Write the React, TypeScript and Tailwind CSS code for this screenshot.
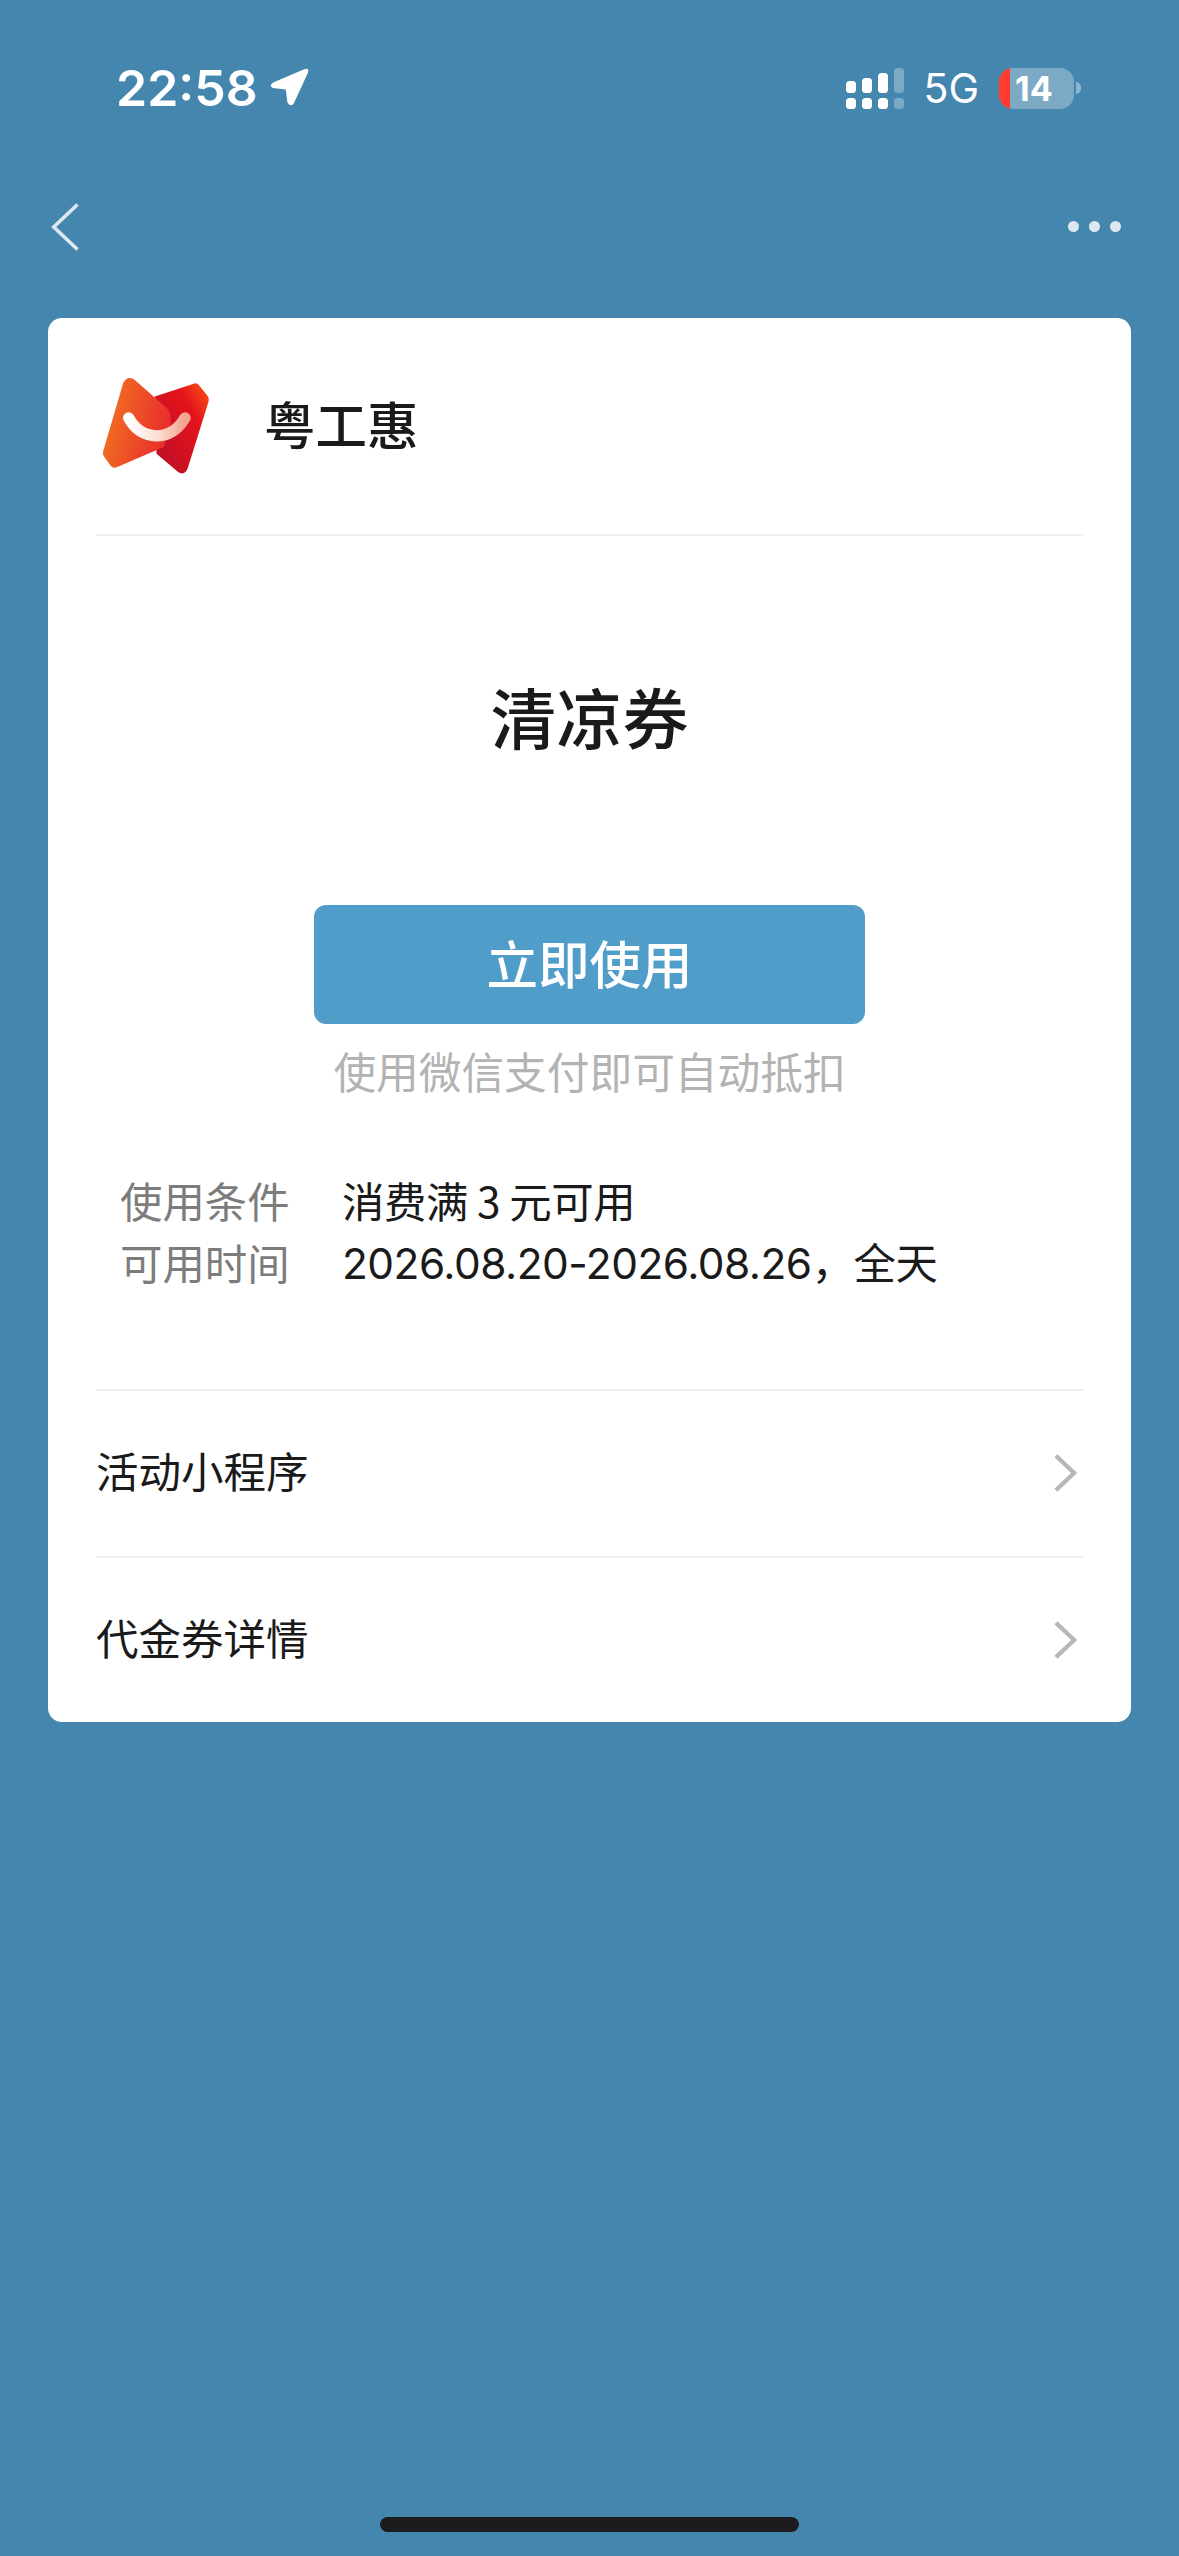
const cjk = "font-['Noto_Sans_CJK_SC','Noto_Sans',sans-serif]";

function Logo() {
  return (
    <svg width="113" height="103" viewBox="180 190 340 310">
      <defs>
        <linearGradient id="back" x1="0" y1="1" x2="1" y2="0">
          <stop offset="0" stopColor="#b80d28" />
          <stop offset="0.7" stopColor="#e5141c" />
          <stop offset="1" stopColor="#fb5a14" />
        </linearGradient>
        <linearGradient id="front" x1="0" y1="0" x2="1" y2="0.3">
          <stop offset="0" stopColor="#f47a20" />
          <stop offset="1" stopColor="#e8302c" />
        </linearGradient>
        <linearGradient id="smile" x1="0" y1="0" x2="1" y2="0">
          <stop offset="0" stopColor="#ffffff" />
          <stop offset="0.55" stopColor="#fbdcd0" />
          <stop offset="1" stopColor="#f2a38e" />
        </linearGradient>
      </defs>
      <path d="M345 258 L462 219 Q472 216 478 224 L504 256 Q510 263 507 272 L444 474 Q436 496 416 486 L350 430 Z" fill="url(#back)" />
      <path d="M250 216 Q262 194 282 206 L378 290 Q398 308 392 340 L372 410 L232 470 Q220 476 212 466 L192 438 Q186 430 190 420 Z" fill="url(#front)" />
      <path d="M266 322 Q296 376 350 376 Q404 376 436 322" fill="none" stroke="url(#smile)" strokeWidth="34" strokeLinecap="round" />
    </svg>
  );
}

function SignalIcon() {
  const bars = [
    { x: 0, top: 13, h: 12, o: 1 },
    { x: 16, top: 10, h: 15, o: 1 },
    { x: 32, top: 5, h: 20, o: 1 },
    { x: 48, top: 0, h: 25, o: 0.3 },
  ];
  return (
    <svg width="58" height="41" viewBox="0 0 58 41" fill="#fff">
      {bars.map((b) => (
        <g key={b.x} opacity={b.o}>
          <rect x={b.x} y={b.top} width="10" height={b.h} rx="3.5" />
          <rect x={b.x} y="30" width="10" height="11" rx="3.5" />
        </g>
      ))}
    </svg>
  );
}

function Chevron({ dir, className, width }: { dir: 'left' | 'right'; className: string; width: string }) {
  return (
    <svg className={className} viewBox="0 0 24 40" fill="none" stroke="currentColor" strokeWidth={width}>
      <path d={dir === 'left' ? 'M22 2 L3 20 L22 38' : 'M2 2 L21 20 L2 38'} />
    </svg>
  );
}

function LinkRow({ label }: { label: string }) {
  return (
    <div className="h-[166.5px] flex items-center justify-between border-t-2 border-[#efefef] pr-[6px]">
      <span className="text-[42.5px] text-[#1a1a1a] pb-[6px]">{label}</span>
      <Chevron dir="right" width="4.6" className="w-[23px] h-[40px] text-[#b7b7b7]" />
    </div>
  );
}

export default function App() {
  return (
    <div className={`relative h-[2556px] bg-[#4486ad] flex flex-col ${cjk}`}>
      {/* status bar */}
      <div className="h-[175px] pt-[60px] pl-[116px] pr-[98px] flex justify-between items-start text-white">
        <div className="flex items-center gap-[10px] h-[56px]">
          <span className="font-['Inter',sans-serif] text-[50px] font-semibold leading-none">22:58</span>
          <svg width="42" height="42" viewBox="800 110 130 130" fill="#fff" className="-mt-[2px]">
            <path d="M912 120 L818 160 Q800 170 815 178 L855 183 L860 222 Q870 240 880 225 L924 130 Q928 114 912 120Z" />
          </svg>
        </div>
        <div className="flex items-center h-[56px]">
          <SignalIcon />
          <span className="font-['Inter',sans-serif] text-[41px] ml-[19px] mr-[20px] leading-none">5G</span>
          <div className="w-[75px] h-[41px] rounded-[14px] bg-white/30 overflow-hidden flex">
            <div className="w-[11px] bg-[#ff3b30]" />
            <span className="font-['Inter',sans-serif] text-[34px] font-bold leading-[41px] pl-[5px]">14</span>
          </div>
          <div className="w-[5px] h-[12px] ml-[2px] rounded-r-full bg-white/40" />
        </div>
      </div>

      {/* nav */}
      <div className="h-[143px] pl-[50px] pr-[58px] flex justify-between items-start pt-[25px]">
        <Chevron dir="left" width="2.9" className="w-[30px] h-[54px] text-[#dbe8f0]" />
        <div className="flex gap-[10px] mt-[21px]">
          <div className="w-[11px] h-[11px] rounded-full bg-[#dbe8f0]" />
          <div className="w-[11px] h-[11px] rounded-full bg-[#dbe8f0]" />
          <div className="w-[11px] h-[11px] rounded-full bg-[#dbe8f0]" />
        </div>
      </div>

      {/* card */}
      <div className="mx-[48px] bg-white rounded-[14px] px-[48px]">
        <div className="h-[216px] flex items-center">
          <div className="ml-[4px] -mt-[2px]">
            <Logo />
          </div>
          <span className="ml-[51px] text-[51.5px] font-medium text-[#1a1a1a] pb-[6px]">粤工惠</span>
        </div>

        <div className="h-[371px] flex items-center justify-center border-t-2 border-[#efefef]">
          <h1 className="text-[66px] font-medium text-[#1a1a1a] pb-[10px]">清凉券</h1>
        </div>

        <div className="w-[551px] h-[119px] mx-auto rounded-[12px] bg-[#4f9dc8] flex items-center justify-center text-[51.5px] font-medium text-white pb-[6px]">
          立即使用
        </div>
        <p className="text-center text-[42.7px] leading-[92px] pb-[4px] text-[#b3b3b3]">使用微信支付即可自动抵扣</p>

        <div className="mt-[49px] pl-[24px] grid grid-cols-[222px_1fr] text-[42.4px] leading-[62px]">
          <span className="text-[#7c7c7c]">使用条件</span>
          <span className="text-[#1a1a1a] tracking-[-0.4px]">消费满 3 元可用</span>
          <span className="text-[#7c7c7c]">可用时间</span>
          <span className="text-[#1a1a1a] font-['Inter','Noto_Sans_CJK_SC',sans-serif] tracking-[-0.5px] pt-[2px]">2026.08.20-2026.08.26，全天</span>
        </div>

        <div className="mt-[94px]">
          <LinkRow label="活动小程序" />
          <LinkRow label="代金券详情" />
        </div>
      </div>

      {/* home indicator */}
      <div className="mt-auto mb-[24px] mx-auto w-[419px] h-[15px] rounded-full bg-[#1c1c1e]" />
    </div>
  );
}
